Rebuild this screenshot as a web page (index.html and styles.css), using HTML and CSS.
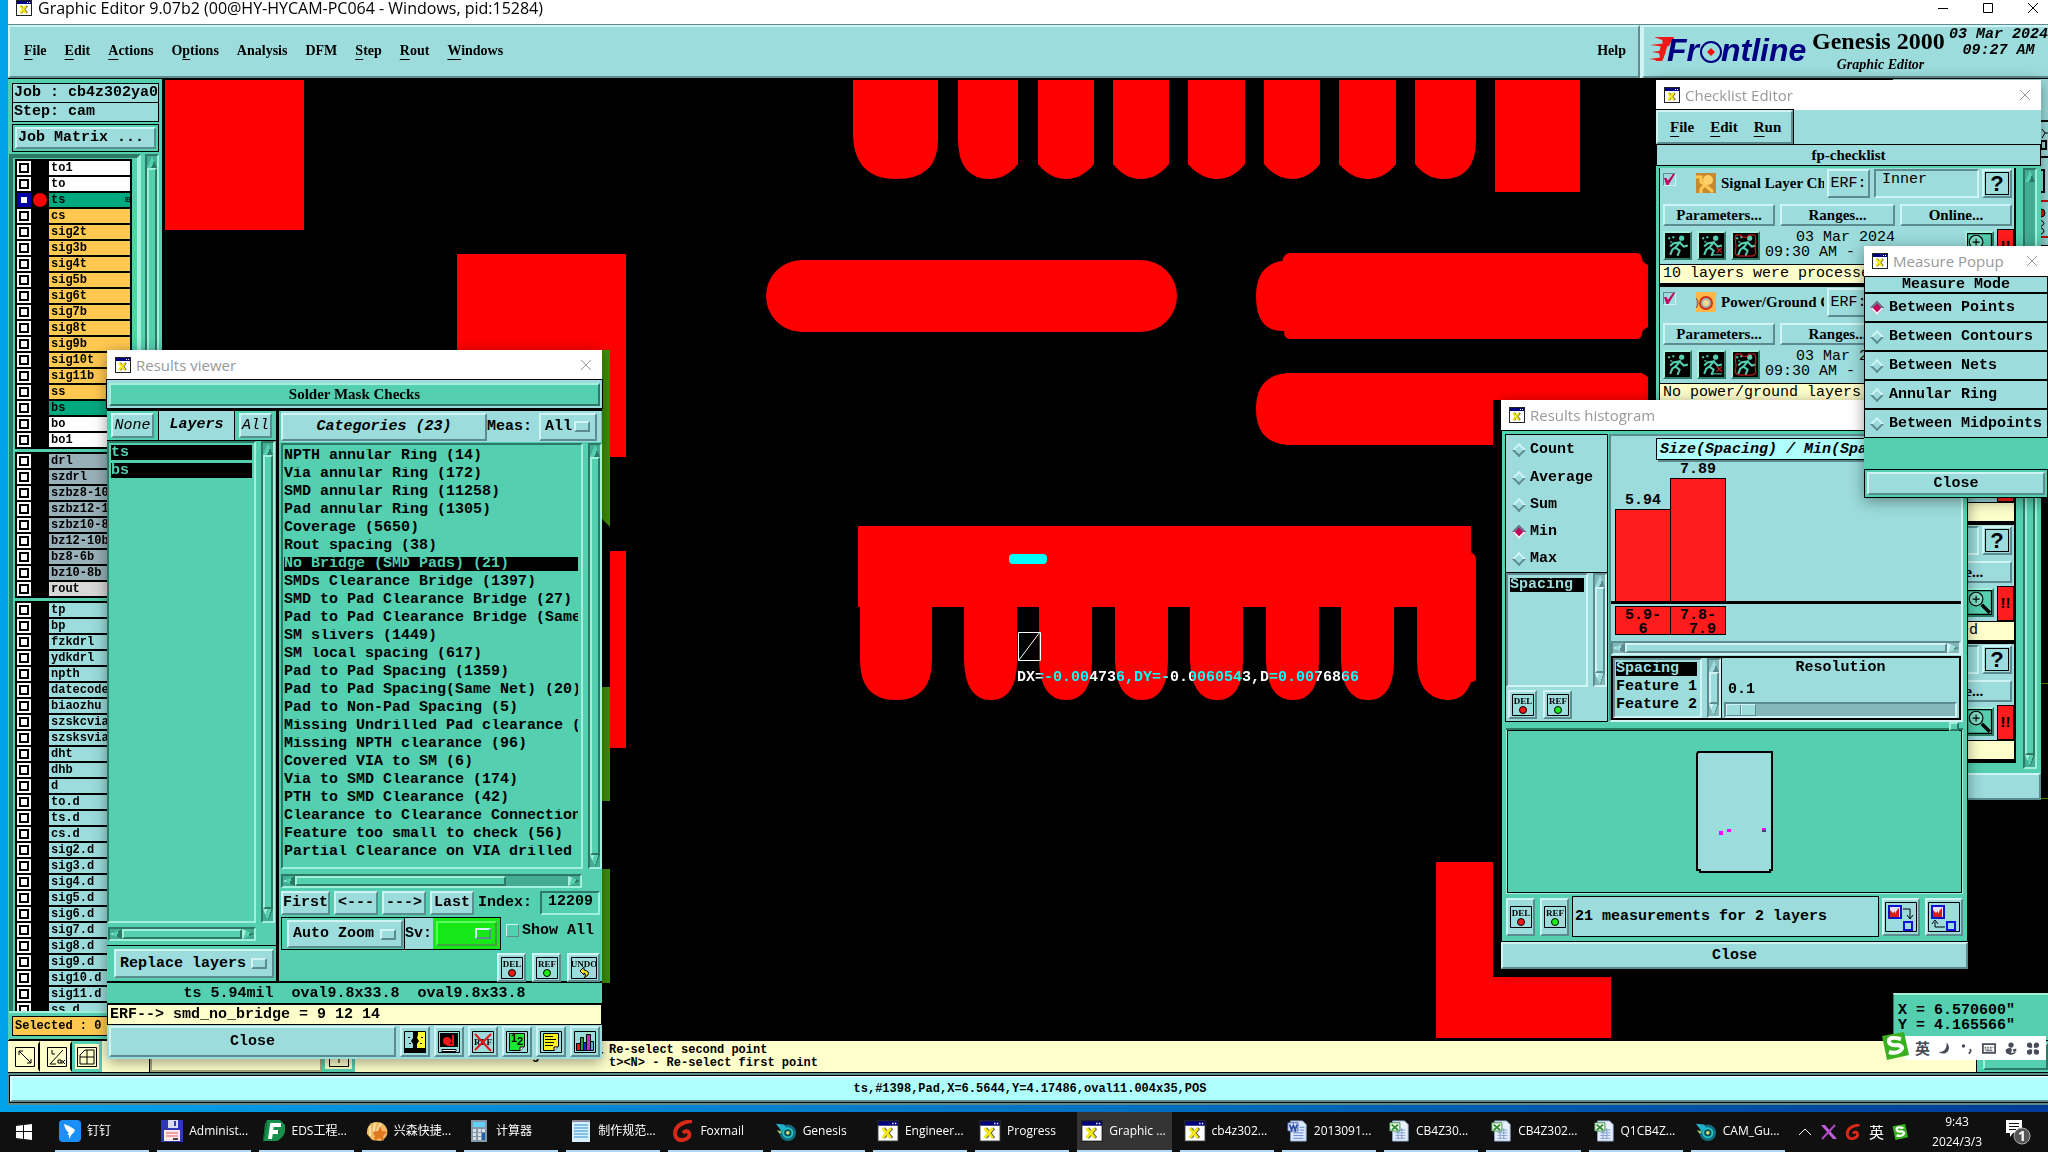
FILE: index.html
```html
<!DOCTYPE html>
<html lang="en">
<head>
<meta charset="utf-8">
<title>Graphic Editor 9.07b2</title>
<link rel="stylesheet" href="styles.css">
</head>
<body>
<svg class="defs" aria-hidden="true">
  <symbol id="xwin" viewBox="0 0 16 16"><path d="M0 0h16v16H0z" fill="#222"/><path d="M1 4h14v11H1z" fill="#fff"/><path d="M1 1h14v3H1z" fill="#000080"/><path d="M11 2h1v1h-1zM13 2h1v1h-1z" fill="#fff"/><path d="M5 6l6 7M11 6l-6 7" stroke="#665" stroke-width="2"/><path d="M4 6l6 7M10 6l-6 7" stroke="#f4e818" stroke-width="2"/></symbol>
  <symbol id="close" viewBox="0 0 12 12"><path d="M1 1l10 10M11 1L1 11" stroke="currentColor" fill="none"/></symbol>
  <symbol id="del" viewBox="0 0 22 22"><path d="M.5.500h21v21H.5z" fill="none" stroke="#000"/><text x="11" y="10" class="tiny">DEL</text><circle cx="11" cy="16" r="3.500" fill="#f01818" stroke="#000"/></symbol>
  <symbol id="ref" viewBox="0 0 22 22"><path d="M.5.500h21v21H.5z" fill="none" stroke="#000"/><text x="11" y="10" class="tiny">REF</text><circle cx="11" cy="16" r="3.500" fill="#18f018" stroke="#000"/></symbol>
  <symbol id="undo" viewBox="0 0 26 22"><path d="M.5.500h25v21H.5z" fill="none" stroke="#000"/><text x="13" y="10" class="tiny">UNDO</text><path d="M9 14l4-4v3q6 1 4 5l-4 3q3-4 0-5v2z" fill="#f8e020" stroke="#000"/></symbol>
  <symbol id="man" viewBox="0 0 24 24"><path d="M0 0h24v24H0z"/><circle cx="16" cy="5" r="2.500" fill="#54cfb0"/><path d="M15 8l-5 6 4 3-2 5M11 13l-4 3-2 5M14 9l-6 1-3 3M14 9l4 4 4-1" fill="none" stroke="#54cfb0" stroke-width="2"/><path d="M3 4h2v2H3zM7 3h2v2H7zM5 8h2v1H5z" fill="#54cfb0"/></symbol>
  <symbol id="manx" viewBox="0 0 24 24"><use href="#man"/><path d="M17 14l5 5M22 14l-5 5" stroke="#d02020"/><path d="M12 21h10" stroke="#54cfb0"/></symbol>
  <symbol id="manr" viewBox="0 0 24 24"><use href="#man"/><path d="M2 5l1-3h5l1 2h5l1-2h6l1 5-1 6 1 7-3 2H5l-3-2 1-7z" fill="none" stroke="#e02020"/></symbol>
  <symbol id="mag" viewBox="0 0 22 22"><path d="M.5.500h21v21H.5z" fill="none" stroke="#000"/><circle cx="8" cy="8" r="6" fill="#7edcc4" stroke="#000"/><path d="M8 5v6M5 8h6" stroke="#000"/><path d="M13 13l7 7" stroke="#000" stroke-width="3"/></symbol>
  <symbol id="eyelogo" viewBox="0 0 24 22"><circle cx="14" cy="13" r="9" fill="#126c80"/><circle cx="14" cy="13" r="6" fill="#24c8c0"/><circle cx="14" cy="13" r="4" fill="#104860"/><circle cx="14" cy="13" r="2" fill="#c8e860"/><path d="M1 3l9 1 3 5-6 2z" fill="#20b0c8"/><path d="M2 10l6 2-3 2z" fill="#a8d860"/></symbol>
  <symbol id="xls" viewBox="0 0 22 24"><path d="M4 1h13l4 4v18H4z" fill="#e8f0fc" stroke="#90a8d0"/><path d="M7 11h11M7 14h11M7 17h11M7 20h11M10 9v12M14 9v12" stroke="#7c98d0"/><path d="M1 3h11v9H1z" fill="#eef8ec" stroke="#3a8a40"/><path d="M3 5l7 6M10 5l-7 6" stroke="#2c8a34" stroke-width="2"/></symbol>
  <symbol id="doc" viewBox="0 0 22 24"><path d="M4 1h13l4 4v18H4z" fill="#dce8fc" stroke="#90a8d0"/><path d="M7 14h11M7 17h11M7 20h11M14 8h5M14 11h5" stroke="#5c80c8"/><path d="M1 3h11v9H1z" fill="#e8f0fc" stroke="#3458a8"/><path d="M3 5l2 6 2-5 2 5 2-6" fill="none" stroke="#2c50a8" stroke-width="2"/></symbol>
</svg>

<main class="desktop">
  <section class="app">
    <header class="app-title"><svg class="i16"><use href="#xwin"/></svg><h1>Graphic Editor 9.07b2 (00@HY-HYCAM-PC064 - Windows, pid:15284)</h1>
      <span class="wbtns"><svg viewBox="0 0 12 12"><path d="M1 6.500h10" stroke="#000"/></svg><svg viewBox="0 0 12 12"><path d="M1.500 1.500h9v9h-9z" stroke="#000" fill="none"/></svg><svg><use href="#close"/></svg></span></header>
    <div class="topbar">
      <nav class="menu up">
        <a href="#"><u>F</u>ile</a><a href="#"><u>E</u>dit</a><a href="#"><u>A</u>ctions</a><a href="#">O<u>p</u>tions</a><a href="#">Analysis</a><a href="#">DFM</a><a href="#"><u>S</u>tep</a><a href="#"><u>R</u>out</a><a href="#"><u>W</u>indows</a><a href="#" class="help">Help</a>
      </nav>
      <div class="brand up">
        <svg class="logo" viewBox="0 0 158 34"><path d="M5 2h20l-1 4H16zM1 10l18-2-2 4zM3 17l13-2-2 4zM0 24l15-2-2 4z" fill="#f01818"/><path d="M13 3h11l-4 8h-6zM12 10h7l-3 8h-6zM10 17h7l-4 9H6l5-3z" fill="#f01818"/><g class="logot"><text x="18" y="26">Fr</text><text x="72" y="26">ntline</text></g><circle cx="62" cy="17" r="10" fill="#9cdcdc" stroke="#000080" stroke-width="2"/><path d="M62 13l4 4-4 4-4-4z" fill="#f01010"/></svg>
        <div class="prod"><strong>Genesis 2000</strong><em>Graphic Editor</em></div>
        <div class="date">03 Mar 2024<br>09:27 AM</div>
      </div>
    </div>

    <div class="work">
      <aside class="side">
        <div class="jobbox">Job : cb4z302ya0</div>
        <div class="jobbox">Step: cam</div>
        <div class="jm"><button class="up">Job Matrix ...</button></div>
        <div class="layers">
          <div class="lyframe"><div class="lylist">
            <div class="grp">
              <label class="ly white"><input type="checkbox"><i></i><span>to1</span></label>
              <label class="ly white"><input type="checkbox"><i></i><span>to</span></label>
              <label class="ly green on"><input type="checkbox" checked><i></i><span>ts</span></label>
              <label class="ly gold"><input type="checkbox"><i></i><span>cs</span></label>
              <label class="ly gold"><input type="checkbox"><i></i><span>sig2t</span></label>
              <label class="ly gold"><input type="checkbox"><i></i><span>sig3b</span></label>
              <label class="ly gold"><input type="checkbox"><i></i><span>sig4t</span></label>
              <label class="ly gold"><input type="checkbox"><i></i><span>sig5b</span></label>
              <label class="ly gold"><input type="checkbox"><i></i><span>sig6t</span></label>
              <label class="ly gold"><input type="checkbox"><i></i><span>sig7b</span></label>
              <label class="ly gold"><input type="checkbox"><i></i><span>sig8t</span></label>
              <label class="ly gold"><input type="checkbox"><i></i><span>sig9b</span></label>
              <label class="ly gold"><input type="checkbox"><i></i><span>sig10t</span></label>
              <label class="ly gold"><input type="checkbox"><i></i><span>sig11b</span></label>
              <label class="ly gold"><input type="checkbox"><i></i><span>ss</span></label>
              <label class="ly green"><input type="checkbox"><i></i><span>bs</span></label>
              <label class="ly white"><input type="checkbox"><i></i><span>bo</span></label>
              <label class="ly white"><input type="checkbox"><i></i><span>bo1</span></label>
            </div>
            <div class="grp">
              <label class="ly slate"><input type="checkbox"><i></i><span>drl</span></label>
              <label class="ly slate"><input type="checkbox"><i></i><span>szdrl</span></label>
              <label class="ly slate"><input type="checkbox"><i></i><span>szbz8-10</span></label>
              <label class="ly slate"><input type="checkbox"><i></i><span>szbz12-1</span></label>
              <label class="ly slate"><input type="checkbox"><i></i><span>szbz10-8</span></label>
              <label class="ly slate"><input type="checkbox"><i></i><span>bz12-10b</span></label>
              <label class="ly slate"><input type="checkbox"><i></i><span>bz8-6b</span></label>
              <label class="ly slate"><input type="checkbox"><i></i><span>bz10-8b</span></label>
              <label class="ly grey"><input type="checkbox"><i></i><span>rout</span></label>
            </div>
            <div class="grp">
              <label class="ly"><input type="checkbox"><i></i><span>tp</span></label>
              <label class="ly"><input type="checkbox"><i></i><span>bp</span></label>
              <label class="ly"><input type="checkbox"><i></i><span>fzkdrl</span></label>
              <label class="ly"><input type="checkbox"><i></i><span>ydkdrl</span></label>
              <label class="ly"><input type="checkbox"><i></i><span>npth</span></label>
              <label class="ly"><input type="checkbox"><i></i><span>datecode</span></label>
              <label class="ly"><input type="checkbox"><i></i><span>biaozhu</span></label>
              <label class="ly"><input type="checkbox"><i></i><span>szskcvia</span></label>
              <label class="ly"><input type="checkbox"><i></i><span>szsksvia</span></label>
              <label class="ly"><input type="checkbox"><i></i><span>dht</span></label>
              <label class="ly"><input type="checkbox"><i></i><span>dhb</span></label>
              <label class="ly"><input type="checkbox"><i></i><span>d</span></label>
              <label class="ly"><input type="checkbox"><i></i><span>to.d</span></label>
              <label class="ly"><input type="checkbox"><i></i><span>ts.d</span></label>
              <label class="ly"><input type="checkbox"><i></i><span>cs.d</span></label>
              <label class="ly"><input type="checkbox"><i></i><span>sig2.d</span></label>
              <label class="ly"><input type="checkbox"><i></i><span>sig3.d</span></label>
              <label class="ly"><input type="checkbox"><i></i><span>sig4.d</span></label>
              <label class="ly"><input type="checkbox"><i></i><span>sig5.d</span></label>
              <label class="ly"><input type="checkbox"><i></i><span>sig6.d</span></label>
              <label class="ly"><input type="checkbox"><i></i><span>sig7.d</span></label>
              <label class="ly"><input type="checkbox"><i></i><span>sig8.d</span></label>
              <label class="ly"><input type="checkbox"><i></i><span>sig9.d</span></label>
              <label class="ly"><input type="checkbox"><i></i><span>sig10.d</span></label>
              <label class="ly"><input type="checkbox"><i></i><span>sig11.d</span></label>
              <label class="ly"><input type="checkbox"><i></i><span>ss.d</span></label>
            </div>
          </div></div>
          <div class="sbar v"><b class="ar n"></b><b class="th"></b><b class="ar s"></b></div>
        </div>
        <div class="selrow"><div class="selected">Selected : 0</div></div>
      </aside>

      <svg class="canvas">
        <g transform="translate(-164 -79)">
          <g fill="#f00">
            <path d="M165 80h139v150H165zM457 254h169v203H457zM610 551h16v197h-16z"/>
            <path d="M853 80h85v60q0 39-42 39t-43-45zM958 80h60v84q-12 15-28 15-32 0-32-40zM1038 80h56v84q-12 15-28 15t-28-15zM1113 80h56v84q-12 15-28 15t-28-15zM1188 80h57v84q-12 15-28 15t-29-15zM1264 80h56v84q-12 15-28 15t-28-15zM1339 80h57v84q-12 15-28 15t-29-15zM1415 80h61v60q0 39-33 39-16 0-28-15zM1495 80h85v112h-85z"/>
            <rect x="766" y="260" width="411" height="72" rx="36"/>
            <path d="M1292 260q-36 0-36 36t28 35q0 8 6 8h346q6 0 6-6 0-3 6-6v-62q-6-3-6-6 0-6-6-6h-346q-6 0-8 9z"/>
            <path d="M1292 373h350l6 4v68h-356q-36 0-36-36t36-36z"/>
            <path d="M858 526h613v26q5 3 5 8v119q0 3-5 3-3 8-8 13-6 5-16 5-30-2-30-40v-53h-23v53q0 40-26 40t-27-40v-53h-22v53q0 40-26 40t-27-40v-53h-23v53q0 40-26 40t-27-40v-53h-22v53q0 40-26 40t-27-40v-53h-23v53q0 40-26 40t-27-40v-53h-22v53q0 40-26 40t-27-40v-53h-32v53q0 40-36 40t-36-40v-53h-2z"/>
            <path d="M1436 862h57v115h118v61h-175z"/>
          </g>
          <path d="M602 350h8v177l-8-8zM602 687h8v114h-8zM602 869h8v114h-8z" fill="#409000"/>
          <path d="M1493 400h10v140h-10z"/>
          <rect x="1009" y="554" width="38" height="10" rx="4" fill="#0ff"/>
          <path d="M1018.500 632.500h22v28h-22zM1019 660l21-28" fill="none" stroke="#fff"/>
          <text class="dx" x="1017" y="681">DX=-0.004736,DY=-0.0060543,D=0.0076866</text>
        </g>
      </svg>

      <aside class="right">
        <div class="tools"><svg viewBox="0 0 8 166"><path d="M0 42h8M0 78h8" stroke="#000" stroke-width="2"/><path d="M2 50l3 4h3M5 54l-3 5" fill="none" stroke="#000"/><path d="M1 62h5v8H1z" fill="none" stroke="#000" stroke-width="2"/><path d="M0 91h4v22H0" fill="none" stroke="#000" stroke-width="2"/><path d="M0 122h8M0 158h8" stroke="#c01010" stroke-width="2"/><circle cx="1" cy="134" r="4" fill="#e01010" stroke="#000"/><path d="M0 141q8 3 0 7q8 4 0 8" fill="none" stroke="#000"/></svg></div>
        <svg class="rlines"><path d="M0 438.500h160M0 553.500h160" stroke="#409000"/></svg>
        <div class="coords">X = 6.570600"<br>Y = 4.165566"</div>
      </aside>
    </div>

    <div class="prompt">
      <button class="tool" aria-label="Snap"><svg viewBox="0 0 20 20"><path d="M.5.500h19v19H.5z" fill="none" stroke="#000"/><path d="M4 4l12 12M4 8V4h4M12 16h4v-4" fill="none" stroke="#000"/></svg></button>
      <button class="tool" aria-label="Angle"><svg viewBox="0 0 20 20"><path d="M.5.500h19v19H.5z" fill="none" stroke="#000"/><path d="M3 17L16 3M5 3v4h3M3 17h6M11 13h3v3h-3zM15 13v4M18 13l-2 2 2 2" fill="none" stroke="#000"/></svg></button>
      <button class="tool hot" aria-label="Grid"><svg viewBox="0 0 20 20"><path d="M.5.500h19v19H.5z" fill="none" stroke="#000"/><path d="M3 8l5-5h9v14H3zM10 3v14M3 10h14" fill="none" stroke="#000"/></svg></button>
      <span class="lead">Cmd :</span>
      <input class="cmd" aria-label="Command" type="text">
      <button class="tool hot narrow" aria-label="Keypad"><svg viewBox="0 0 20 20"><path d="M.5.500h19v19H.5zM10 4v12M4 10h12" fill="none" stroke="#000"/></svg></button>
      <div class="msg"><span class="m1">&lt;M1&gt; - Select first rectangle corner</span><span class="m2">Re-select second point<br>t&gt;&lt;N&gt; - Re-select first point</span></div>
      <div class="then"><button class="gup">Then =</button></div>
    </div>
    <div class="status"><div>ts,#1398,Pad,X=6.5644,Y=4.17486,oval11.004x35,POS</div></div>
  </section>

  <!-- Checklist editor -->
  <section class="win check">
    <header><svg class="i16"><use href="#xwin"/></svg><h2>Checklist Editor</h2><svg class="x"><use href="#close"/></svg></header>
    <div class="cmenu"><nav class="menu up"><a href="#"><u>F</u>ile</a><a href="#"><u>E</u>dit</a><a href="#"><u>R</u>un</a></nav></div>
    <div class="cname">fp-checklist</div>
    <div class="cbody">
      <div class="items">
        <article class="item">
          <div class="r1"><input type="checkbox" class="ck" checked aria-label="Use signal layer checks"><svg class="i20" viewBox="0 0 20 20"><path d="M0 0h20v20H0z" fill="#c88830"/><path d="M0 4h5v5l4 3-4 4v4M9 12l8 7" fill="none" stroke="#ffc850" stroke-width="3"/><circle cx="12" cy="7" r="5" fill="#ffd068"/></svg><span class="nm">Signal Layer Ch</span><button class="up erf">ERF:</button><input type="text" class="dn" value="Inner" aria-label="ERF model"><button class="up q" aria-label="Help"><b>?</b></button></div>
          <div class="r2"><button class="up">Parameters...</button><button class="up">Ranges...</button><button class="up">Online...</button></div>
          <div class="r3"><button class="gup" aria-label="Run"><svg><use href="#man"/></svg></button><button class="gup" aria-label="Run selected"><svg><use href="#manx"/></svg></button><button class="gup" aria-label="Run in area"><svg><use href="#manr"/></svg></button><p><span>03 Mar 2024</span><br>09:30 AM - 0</p><button class="gup" aria-label="View results"><svg><use href="#mag"/></svg></button><span class="bang">!!</span></div>
          <div class="note">10 layers were processed</div>
        </article>
        <article class="item">
          <div class="r1"><input type="checkbox" class="ck" checked aria-label="Use power ground checks"><svg class="i20" viewBox="0 0 20 20"><path d="M0 0h20v20H0z" fill="#ffb848"/><circle cx="10" cy="11" r="6" fill="#9cb8b0" stroke="#d83018" stroke-width="2"/><circle cx="10" cy="11" r="3" fill="#ffd890"/><path d="M0 6q4 5 0 10" fill="#9cb8b0" stroke="#805020"/></svg><span class="nm">Power/Ground C</span><button class="up erf">ERF:</button><input type="text" class="dn" aria-label="ERF model"><button class="up q" aria-label="Help"><b>?</b></button></div>
          <div class="r2"><button class="up">Parameters...</button><button class="up">Ranges...</button><button class="up">Online...</button></div>
          <div class="r3"><button class="gup" aria-label="Run"><svg><use href="#man"/></svg></button><button class="gup" aria-label="Run selected"><svg><use href="#manx"/></svg></button><button class="gup" aria-label="Run in area"><svg><use href="#manr"/></svg></button><p><span>03 Mar 2024</span><br>09:30 AM - </p><button class="gup" aria-label="View results"><svg><use href="#mag"/></svg></button><span class="bang">!!</span></div>
          <div class="note">No power/ground layers</div>
        </article>
        <article class="item">
          <div class="r1"><input type="checkbox" class="ck" checked aria-label="Use drill checks"><span class="nm"></span><button class="up q" aria-label="Help"><b>?</b></button></div>
          <div class="r2"><button class="up"></button><button class="up"></button><button class="up">Online...</button></div>
          <div class="r3"><p></p><button class="gup" aria-label="View results"><svg><use href="#mag"/></svg></button><span class="bang">!!</span></div>
          <div class="note"></div>
        </article>
        <article class="item">
          <div class="r1"><input type="checkbox" class="ck" checked aria-label="Use solder mask checks"><span class="nm"></span><input type="text" class="dn" aria-label="ERF model"><button class="up q" aria-label="Help"><b>?</b></button></div>
          <div class="r2"><button class="up"></button><button class="up"></button><button class="up">Online...</button></div>
          <div class="r3"><p></p><button class="gup" aria-label="View results"><svg><use href="#mag"/></svg></button><span class="bang">!!</span></div>
          <div class="note">10 signal layers were all processed</div>
        </article>
        <article class="item">
          <div class="r1"><input type="checkbox" class="ck" checked aria-label="Use silk screen checks"><span class="nm"></span><input type="text" class="dn" aria-label="ERF model"><button class="up q" aria-label="Help"><b>?</b></button></div>
          <div class="r2"><button class="up"></button><button class="up"></button><button class="up">Online...</button></div>
          <div class="r3"><p></p><button class="gup" aria-label="View results"><svg><use href="#mag"/></svg></button><span class="bang">!!</span></div>
          <div class="note"></div>
        </article>
      </div>
      <div class="sbar v"><b class="ar n"></b><b class="sp"></b><b class="th"></b><b class="ar s"></b></div>
    </div>
    <button class="up wide" aria-label="Close"></button>
  </section>

  <!-- Results viewer -->
  <section class="win viewer">
    <header><svg class="i16"><use href="#xwin"/></svg><h2>Results viewer</h2><svg class="x"><use href="#close"/></svg></header>
    <div class="vtitle"><div class="gup">Solder Mask Checks</div></div>
    <div class="vcols">
      <div class="vleft">
        <div class="lhead"><span><button class="up it">None</button></span><strong>Layers</strong><span><button class="up it">All</button></span></div>
        <div class="listrow">
          <ul class="gdn list"><li class="on">ts</li><li class="on">bs</li></ul>
          <div class="sbar v"><b class="ar n"></b><b class="th"></b><b class="ar s"></b></div>
        </div>
        <div class="sbar h"><b class="ar w"></b><b class="th"></b><b class="ar e"></b></div>
        <div class="rep"><span class="pick up"><select aria-label="Layer mode"><option>Replace layers</option></select></span></div>
      </div>
      <div class="vright">
        <div class="chead"><button class="up">Categories (23)</button><label for="meas">Meas:</label><span class="pick up"><select id="meas"><option>All</option></select></span></div>
        <div class="listrow">
          <ul class="gdn list">
            <li>NPTH annular Ring (14)</li>
            <li>Via annular Ring (172)</li>
            <li>SMD annular Ring (11258)</li>
            <li>Pad annular Ring (1305)</li>
            <li>Coverage (5650)</li>
            <li>Rout spacing (38)</li>
            <li class="on">No Bridge (SMD Pads) (21)</li>
            <li>SMDs Clearance Bridge (1397)</li>
            <li>SMD to Pad Clearance Bridge (27)</li>
            <li>Pad to Pad Clearance Bridge (Same</li>
            <li>SM slivers (1449)</li>
            <li>SM local spacing (617)</li>
            <li>Pad to Pad Spacing (1359)</li>
            <li>Pad to Pad Spacing(Same Net) (20)</li>
            <li>Pad to Non-Pad Spacing (5)</li>
            <li>Missing Undrilled Pad clearance (</li>
            <li>Missing NPTH clearance (96)</li>
            <li>Covered VIA to SM (6)</li>
            <li>Via to SMD Clearance (174)</li>
            <li>PTH to SMD Clearance (42)</li>
            <li>Clearance to Clearance Connection</li>
            <li>Feature too small to check (56)</li>
            <li>Partial Clearance on VIA drilled</li>
          </ul>
          <div class="sbar v"><b class="ar n"></b><b class="th"></b><b class="ar s"></b></div>
        </div>
        <div class="sbar h"><b class="ar w"></b><b class="th"></b><b class="sp"></b><b class="ar e"></b></div>
        <div class="nav"><button class="up">First</button><button class="up">&lt;---</button><button class="up">---&gt;</button><button class="up">Last</button><label for="idx">Index:</label><input id="idx" type="text" class="gin" value="12209"></div>
        <div class="zoomrow"><div class="zbox"><span class="pick up"><select aria-label="Zoom mode"><option>Auto Zoom</option></select></span></div><div class="svbox"><label for="sv">Sv:</label><span class="pick sv"><select id="sv"><option></option></select></span></div><label class="showall"><input type="checkbox" class="ck">Show All</label></div>
        <div class="icons"><button class="up" aria-label="Delete"><svg><use href="#del"/></svg></button><button class="up" aria-label="Reference"><svg><use href="#ref"/></svg></button><button class="up u" aria-label="Undo"><svg><use href="#undo"/></svg></button></div>
      </div>
    </div>
    <div class="vinfo">ts 5.94mil  oval9.8x33.8  oval9.8x33.8</div>
    <div class="verf">ERF--&gt; smd_no_bridge = 9 12 14</div>
    <div class="vfoot">
      <button class="up cl">Close</button>
      <button class="up ic" aria-label="Compare"><svg viewBox="0 0 22 22"><path d="M0 0h22v22H0z" fill="#9cdcdc"/><path d="M13 0h9v22h-9z" fill="#ffff30"/><path d="M9 0h5v4l-1 3 2 3-2 3v4h9v5H0v-5h9v-4l-2-3 2-3z"/><path d="M.5.500h21v21H.5z" fill="none" stroke="#000"/><path d="M4 6h2v1H4zM17 6h2v1h-2zM5 12h2v1H5zM16 12h2v1h-2z"/></svg></button>
      <button class="up ic" aria-label="Record"><svg viewBox="0 0 22 22"><path d="M.5.500h21v21H.5z" fill="none" stroke="#000"/><path d="M2 2h18v14H2z"/><circle cx="9" cy="10" r="4" fill="#f01818"/><path d="M15 4v10h-6" fill="none" stroke="#f01818" stroke-width="2"/><path d="M4 18.500h14v2H4z" fill="#fff" stroke="#000"/></svg></button>
      <button class="up ic" aria-label="Clear reference"><svg viewBox="0 0 22 22"><path d="M.5.500h21v21H.5z" fill="none" stroke="#000"/><text x="11" y="14" class="tiny">REF</text><path d="M3 3l16 17M19 3L3 19" stroke="#e01818" stroke-width="2"/></svg></button>
      <button class="up ic" aria-label="Numbers"><svg viewBox="0 0 22 22"><path d="M.5.500h21v21H.5z" fill="none" stroke="#000"/><path d="M3.500 2.500h15v13l-4 4h-11z" fill="#18e830" stroke="#000"/><path d="M14 20v-4h4" fill="#fff" stroke="#000"/><text x="5" y="11" class="num">1</text><text x="11" y="14" class="num">2</text></svg></button>
      <button class="up ic" aria-label="Report"><svg viewBox="0 0 22 22"><path d="M.5.500h21v21H.5z" fill="none" stroke="#000"/><path d="M3.500 2.500h15v13l-4 4h-11z" fill="#f8f020" stroke="#000"/><path d="M5 5.500h8M5 8.500h11M5 11.500h9M5 14.500h8" stroke="#000"/><path d="M14 20v-4h4" fill="#fff" stroke="#000"/></svg></button>
      <button class="up ic" aria-label="Histogram"><svg viewBox="0 0 22 22"><path d="M.5.500h21v21H.5z" fill="none" stroke="#000"/><path d="M2.500 12.500h4v7h-4z" fill="#e01818" stroke="#000"/><path d="M6.500 6.500h3v13h-3z" fill="#18a830" stroke="#000"/><path d="M9.500 11.500h3v8h-3z" fill="#2020d0" stroke="#000"/><path d="M12.500 3.500h4v16h-4z" fill="#c030c0" stroke="#000"/><path d="M16.500 10.500h3v9h-3z" fill="#50a8f0" stroke="#000"/></svg></button>
    </div>
  </section>

  <!-- Results histogram -->
  <section class="win hist">
    <header><svg class="i16"><use href="#xwin"/></svg><h2>Results histogram</h2></header>
    <div class="hbody">
      <div class="htop">
        <div class="hleft">
          <div class="radios">
            <label><input type="radio" name="agg">Count</label><label><input type="radio" name="agg">Average</label><label><input type="radio" name="agg">Sum</label><label><input type="radio" name="agg" checked>Min</label><label><input type="radio" name="agg">Max</label>
          </div>
          <div class="listrow"><ul class="dn list"><li class="on">Spacing</li></ul><div class="sbar v b"><b class="ar n"></b><b class="th"></b><b class="ar s"></b></div></div>
          <div class="icons"><button class="up" aria-label="Delete"><svg><use href="#del"/></svg></button><button class="up" aria-label="Reference"><svg><use href="#ref"/></svg></button></div>
        </div>
        <div class="hright">
          <div class="chart">
            <div class="ctitle">Size(Spacing) / Min(Spa</div>
            <div class="bars"><div><span>5.94</span><i class="b1"></i></div><div><span>7.89</span><i class="b2"></i></div></div>
            <div class="blabels"><span>5.9-<br>6</span><span>7.8-<br>&nbsp;7.9</span></div>
          </div>
          <div class="sbar h b"><b class="ar w"></b><b class="th"></b><b class="ar e"></b></div>
          <div class="hopts">
            <div class="listrow"><ul class="dn list"><li class="on">Spacing</li><li>Feature 1</li><li>Feature 2</li></ul><div class="sbar v b"><b class="ar n"></b><b class="th"></b><b class="ar s"></b></div></div>
            <div class="reso"><label for="res">Resolution</label><output for="res">0.1</output><input id="res" type="range" min="0" max="100" value="0"></div>
          </div>
        </div>
      </div>
      <div class="sash"><i></i></div>
      <div class="map"><svg viewBox="0 0 78 122"><path d="M1 3l1-2h74v118h-2v2H4v-2H1z" fill="#9cdcdc" stroke="#000" stroke-width="2"/><path d="M23 80h4v4h-4zM31 78h4v3h-4zM66 77h4v2h-4z" fill="#f0f"/><path d="M66 79h4v2h-4z" fill="#446"/></svg></div>
      <div class="hfoot"><button class="up" aria-label="Delete"><svg><use href="#del"/></svg></button><button class="up" aria-label="Reference"><svg><use href="#ref"/></svg></button><div class="count">21 measurements for 2 layers</div>
        <button class="up big" aria-label="Copy out"><svg viewBox="0 0 32 30"><path d="M.5.500h31v29H.5z" fill="none" stroke="#000"/><path d="M4 4h12v12H4z" fill="#e8e0f0" stroke="#1010d0" stroke-width="2"/><path d="M5 14V8l3 3 2-2v3l2-4 2-2v9H5z" fill="#e01818"/><path d="M19 20h8v8h-8z" fill="none" stroke="#1010e0" stroke-width="2"/><path d="M18 7h7v9M22 13l3 4 3-4" fill="none" stroke="#000"/></svg></button>
        <button class="up big" aria-label="Copy in"><svg viewBox="0 0 32 30"><path d="M.5.500h31v29H.5z" fill="none" stroke="#000"/><path d="M4 4h12v12H4z" fill="#e8e0f0" stroke="#1010d0" stroke-width="2"/><path d="M5 14V8l3 3 2-2v3l2-4 2-2v9H5z" fill="#e01818"/><path d="M19 20h8v8h-8z" fill="none" stroke="#1010e0" stroke-width="2"/><path d="M17 25H7v-5M4 22l3-4 3 4" fill="none" stroke="#000"/></svg></button>
      </div>
    </div>
    <button class="up wide">Close</button>
  </section>

  <!-- Measure popup -->
  <section class="win meas">
    <header><svg class="i16"><use href="#xwin"/></svg><h2>Measure Popup</h2><svg class="x"><use href="#close"/></svg></header>
    <div class="mmode">Measure Mode</div>
    <label><input type="radio" name="mm" checked>Between Points</label>
    <label><input type="radio" name="mm">Between Contours</label>
    <label><input type="radio" name="mm">Between Nets</label>
    <label><input type="radio" name="mm">Annular Ring</label>
    <label><input type="radio" name="mm">Between Midpoints</label>
    <div class="mfoot"><button class="up">Close</button></div>
  </section>

  <!-- Input method bar -->
  <div class="ime">
    <svg class="slogo" viewBox="0 0 28 28"><path d="M1 4L23 0l5 23-22 5z" fill="#38b020"/><path d="M20 7q-12-3-12 2t9 4q7 2 2 6-5 3-11 1" fill="none" stroke="#fff" stroke-width="4"/></svg>
    <div><span>英</span><svg viewBox="0 0 16 16"><path d="M10 1q6 7-1 12-4 2-8-1 9 0 9-11z"/></svg><svg viewBox="0 0 16 16"><circle cx="4" cy="5" r="2"/><path d="M11 9q3 1-1 5" fill="none" stroke="#484c58" stroke-width="2"/></svg><svg viewBox="0 0 16 16"><path d="M1 3h14v10H1z" fill="none" stroke="#484c58" stroke-width="2"/><path d="M3 6h2v1H3zM6 6h2v1H6zM9 6h2v1H9zM12 6h1v1h-1zM3 8h2v1H3zM6 8h2v1H6zM9 8h2v1H9zM4 10h8v1H4z"/></svg><svg viewBox="0 0 16 16"><circle cx="8" cy="4" r="3"/><path d="M2 9q6-3 7 0l-1 4 6-1q-3 4-7 3-6-1-5-6z"/><path d="M10 9l4-1v3l-3 1z"/></svg><svg viewBox="0 0 16 16"><circle cx="4" cy="4" r="3"/><circle cx="12" cy="4" r="3"/><circle cx="4" cy="12" r="3"/><circle cx="12" cy="12" r="3"/><path d="M4 4h3v3H4zM9 4h3v3H9zM4 9h3v3H4zM9 9h3v3H9z"/></svg></div>
  </div>
</main>

<footer class="taskbar">
  <button class="start" aria-label="Start"><svg viewBox="0 0 16 16"><path d="M0 2l7-1v6H0zM8 1l8-1v7H8zM0 8h7v7l-7-1zM8 8h8v8l-8-1z" fill="#fff"/></svg></button>
  <div class="tasks">
    <button><svg viewBox="0 0 22 22"><rect width="22" height="22" rx="4" fill="#1890f8"/><path d="M5 4q8 3 11 6-1 3-3 4l-3 5v-4l-2-1 2-1q-4-3-5-9z" fill="#fff"/></svg>钉钉</button>
    <button><svg viewBox="0 0 22 22"><path d="M0 0h22v22H0z" fill="#3038b8"/><path d="M7 0h10v8H7z" fill="#d8dcf0"/><path d="M13 1h2v5h-2z" fill="#3038b8"/><path d="M3 10h16v11H3z" fill="#fce8e8"/><path d="M5 13h12M5 16h12" stroke="#e06060"/><path d="M12 18h5v2h-5z" fill="#444"/></svg>Administ...</button>
    <button><svg viewBox="0 0 22 22"><path d="M4 0h13l5 5v7q-2 6-8 9H0L2 4z" fill="#18904c"/><path d="M0 22L4 1M7 20L10 6h9M9 12h8" fill="none" stroke="#0c5c30" stroke-width="1"/><path d="M7 19L9 5h9M8 12h7" fill="none" stroke="#fff" stroke-width="4"/></svg>EDS工程...</button>
    <button><svg viewBox="0 0 22 22"><path d="M1 14Q0 4 9 2q9-1 12 7 2 8-6 12l-9-1z" fill="#f0b860"/><path d="M4 16L4 6M7 14L9 3M11 12l4-9" stroke="#fce0a8" stroke-width="2"/><path d="M14 6l2 5 5 1-4 4 1 5-5-3-5 3 1-5-3-4 6-1z" fill="#e07820"/></svg>兴森快捷...</button>
    <button><svg viewBox="0 0 22 22"><path d="M3 0h16v22H3z" fill="#8498a8"/><path d="M5 2h12v5H5z" fill="#60d0f8"/><path d="M5 9h3v3H5zM10 9h3v3h-3zM5 13h3v3H5zM10 13h3v3h-3zM5 17h3v3H5zM10 17h3v3h-3zM14 9h3v3h-3z" fill="#d8e0e8"/><path d="M14 13h3v7h-3z" fill="#2060b0"/></svg>计算器</button>
    <button><svg viewBox="0 0 22 22"><path d="M2 2h18v20H2z" fill="#d8f0fc"/><path d="M4 5h14M4 8h14M4 11h14M4 14h14M4 17h14" stroke="#3090d0"/><path d="M2 0h18v2H2z" fill="#889"/></svg>制作规范...</button>
    <button><svg viewBox="0 0 22 22"><path d="M20 1Q3 3 3 14q1 7 8 6 8-2 6-7-2-4-6 0" fill="none" stroke="#d82818" stroke-width="4"/></svg>Foxmail</button>
    <button><svg><use href="#eyelogo"/></svg>Genesis</button>
    <button><svg><use href="#xwin"/></svg>Engineer...</button>
    <button><svg><use href="#xwin"/></svg>Progress</button>
    <button class="act"><svg><use href="#xwin"/></svg>Graphic ...</button>
    <button><svg><use href="#xwin"/></svg>cb4z302...</button>
    <button><svg><use href="#doc"/></svg>2013091...</button>
    <button><svg><use href="#xls"/></svg>CB4Z30...</button>
    <button><svg><use href="#xls"/></svg>CB4Z302...</button>
    <button><svg><use href="#xls"/></svg>Q1CB4Z...</button>
    <button><svg><use href="#eyelogo"/></svg>CAM_Gu...</button>
  </div>
  <div class="tray">
    <svg viewBox="0 0 16 16"><path d="M2 11l6-6 6 6" fill="none" stroke="#fff"/></svg>
    <svg viewBox="0 0 16 16"><path d="M0 1h4l12 14h-4z" fill="#c060d8"/><path d="M14 1L1 15" stroke="#b048c8" stroke-width="2"/></svg>
    <svg viewBox="0 0 22 22"><path d="M20 1Q3 3 3 14q1 7 8 6 8-2 6-7-2-4-6 0" fill="none" stroke="#d82818" stroke-width="4"/></svg>
    <span>英</span>
    <svg viewBox="0 0 28 28"><path d="M1 4L23 0l5 23-22 5z" fill="#38b020"/><path d="M20 7q-12-3-12 2t9 4q7 2 2 6-5 3-11 1" fill="none" stroke="#fff" stroke-width="4"/></svg>
    <time>9:43<br>2024/3/3</time>
    <svg class="note-i" viewBox="0 0 26 26"><path d="M0 1h16v13H7l-3 4v-4H0z" fill="#fff"/><path d="M3 4.500h10M3 7.500h10M3 10.500h7" stroke="#101010"/><circle cx="16" cy="17" r="8" fill="#555" stroke="#aaa"/><text x="16" y="22">1</text></svg>
  </div>
</footer>
</body>
</html>
```
FILE: styles.css
```css
:root {
  --teal: #54cfb0;
  --teal-lt: #a0f0dc;
  --teal-dk: #2c7a66;
  --blue: #9cdcdc;
  --blue-lt: #d0f4f4;
  --blue-dk: #5c8c90;
  --cream: #ffffcc;
  --mono: "Liberation Mono", "Noto Sans CJK SC", monospace;
  --serif: "Liberation Serif", "Noto Sans CJK SC", serif;
  --ui: "Open Sans", "Noto Sans CJK SC", sans-serif;
}
* { box-sizing: border-box; }
body {
  margin: 0; height: 100vh; overflow: hidden;
  display: flex; flex-direction: column;
  font: bold 15px/18px var(--mono); color: #000;
  background: linear-gradient(90deg, #00a2ec, #0070c0 55%, #003c98);
}
button, input, select { font: inherit; color: inherit; padding: 0; margin: 0; border: 0; border-radius: 0; background: none; }
h1, h2, p, ul { margin: 0; padding: 0; list-style: none; font: inherit; }
a { color: inherit; text-decoration: none; }
svg { display: block; flex: none; }
.defs { position: absolute; width: 0; height: 0; }
.tiny { font: bold 9px "Liberation Serif", serif; text-anchor: middle; }
.num { font: bold 11px "Liberation Sans", sans-serif; }
.i16 { width: 16px; height: 16px; }
.i20 { width: 20px; height: 20px; }

/* bevels */
.up { background: var(--blue); border: 2px solid; border-color: var(--blue-lt) var(--blue-dk) var(--blue-dk) var(--blue-lt); }
.dn { background: var(--blue); border: 2px solid; border-color: var(--blue-dk) var(--blue-lt) var(--blue-lt) var(--blue-dk); }
.gup { background: var(--teal); border: 2px solid; border-color: var(--teal-lt) var(--teal-dk) var(--teal-dk) var(--teal-lt); }
.gdn { background: var(--teal); border: 2px solid; border-color: var(--teal-dk) var(--teal-lt) var(--teal-lt) var(--teal-dk); }

/* scroll bars */
.sbar { display: flex; background: #44ac92; border: 2px solid; border-color: var(--teal-dk) var(--teal-lt) var(--teal-lt) var(--teal-dk); flex: none; }
.sbar b { display: block; }
.sbar.v { flex-direction: column; width: 14px; }
.sbar.h { height: 14px; }
.sbar .th { flex: 1; background: var(--teal); border: 2px solid; border-color: var(--teal-lt) var(--teal-dk) var(--teal-dk) var(--teal-lt); }
.sbar .ar { flex: none; width: 10px; height: 10px; background: linear-gradient(110deg, var(--teal-lt) 30%, var(--teal) 30% 60%, var(--teal-dk) 60%); }
.ar.n { clip-path: polygon(50% 0, 100% 100%, 0 100%); }
.ar.s { clip-path: polygon(0 0, 100% 0, 50% 100%); }
.ar.w { clip-path: polygon(0 50%, 100% 0, 100% 100%); }
.ar.e { clip-path: polygon(0 0, 100% 50%, 0 100%); }
.sbar.v .ar { height: 12px; }
.sbar.h .ar { width: 12px; }
.sbar.b { background: #84b8b8; border-color: var(--blue-dk) var(--blue-lt) var(--blue-lt) var(--blue-dk); }
.sbar.b .th { background: var(--blue); border-color: var(--blue-lt) var(--blue-dk) var(--blue-dk) var(--blue-lt); }
.sbar.b .ar { background: linear-gradient(110deg, var(--blue-lt) 30%, var(--blue) 30% 60%, var(--blue-dk) 60%); }

/* main window */
.desktop { flex: 1; min-height: 0; padding: 0 0 7px 8px; position: relative; display: flex; overflow: hidden; }
.app { flex: 1; min-width: 0; display: flex; flex-direction: column; background: var(--teal); }
.app-title { height: 24px; background: #fff; display: flex; gap: 6px; padding-left: 8px; font: 16px/16px var(--ui); flex: none; }
.wbtns { margin-left: auto; display: flex; gap: 33px; padding: 2px 9px 0 0; }
.wbtns svg { width: 12px; height: 12px; }
.topbar { display: flex; height: 55px; background: var(--blue-lt); border-top: 1px solid var(--blue-dk); border-bottom: 1px solid #000; gap: 2px; font: bold 14px/18px var(--serif); flex: none; }
.menu { display: flex; align-items: center; gap: 18px; }
.topbar .menu { flex: 1; padding: 0 0 2px 14px; }
.menu u { text-underline-offset: 4px; }
.help { margin-left: auto; padding-right: 12px; }
.brand { width: 406px; display: flex; overflow: hidden; padding: 0 0 0 5px; border-right: 0; }
.logo { width: 158px; height: 34px; margin-top: 8px; }
.logot { font: italic bold 32px "Liberation Sans", sans-serif; fill: #000080; }
.prod { width: 142px; padding-left: 5px; flex: none; text-align: center; }
.prod strong { display: block; font-size: 24px; line-height: 28px; white-space: nowrap; text-align: left; }
.prod em { display: block; line-height: 20px; }
.date { font: italic bold 15px/16px var(--mono); white-space: nowrap; text-align: center; flex: none; }

.work { flex: 1; min-height: 0; display: flex; }
.side { width: 156px; display: flex; flex-direction: column; padding: 4px 3px 0 4px; border-right: 2px solid #000; flex: none; }
.jobbox { border: 1px solid #000; background: var(--blue); height: 20px; line-height: 18px; padding-left: 1px; margin-bottom: -1px; white-space: nowrap; flex: none; }
.jm { border: 1px solid #000; margin-top: 3px; padding: 2px; flex: none; }
.jm button { width: 100%; height: 22px; text-align: left; padding-left: 1px; display: block; }
.layers { flex: 1; min-height: 0; display: flex; gap: 4px; margin: 2px 0 0 -3px; }
.lyframe { flex: 1; min-width: 0; border: 4px solid; border-color: var(--teal-dk) var(--teal-lt) var(--teal) var(--teal-dk); border-bottom: 0; padding: 1px 5px 0 2px; overflow: hidden; display: flex; }
.lylist { flex: 1; display: flex; flex-direction: column; gap: 3px; min-width: 0; }
.grp { background: #000; padding: 1px 2px; font-size: 12px; flex: none; }
.ly { display: grid; grid-template-columns: 14px 18px 1fr; height: 16px; padding: 1px 0; line-height: 14px; overflow: hidden; }
.ly span { background: var(--blue); padding-left: 2px; white-space: nowrap; overflow: hidden; }
.ly input { appearance: none; width: 14px; height: 14px; background: #fff; border: 2px solid #fff; box-shadow: inset 0 0 0 2px #000; }
.ly.white span { background: #fff; }
.ly.gold span { background: #ffc850; }
.ly.green span { background: #00a880; }
.ly.slate span { background: #98b0b8; }
.ly.grey span { background: #d8d8d8; }
.ly.on input { border-color: #0000a0; box-shadow: inset 0 0 0 2px #0000a0; }
.ly.on i { background: #f00; border-radius: 50%; width: 14px; height: 14px; margin-left: 2px; }
.ly.on span::after { content: "⊞"; float: right; font-size: 8px; }
.side .sbar { border-bottom: 0; }
.selrow { border-top: 2px solid var(--teal-lt); margin: 0 -3px 0 -3px; padding: 3px 0 3px 3px; border-bottom: 1px solid #000; flex: none; }
.selected { border: 1px solid #000; background: #ffc850; font-size: 12px; line-height: 18px; padding-left: 2px; }
.canvas { flex: 1; min-width: 0; height: 100%; background: #000; }
.dx { font: bold 15px var(--mono); fill: #fff; mix-blend-mode: difference; }
.right { width: 155px; background: #000; display: flex; flex-direction: column; flex: none; }
.tools { height: 166px; background: var(--blue); display: flex; justify-content: flex-end; flex: none; }
.tools svg { width: 8px; height: 166px; }
.rlines { width: 100%; flex: 1; min-height: 0; }
.coords { height: 47px; background: var(--teal); border-top: 2px solid var(--teal-lt); border-left: 1px solid var(--teal-dk); padding: 8px 0 0 4px; line-height: 15px; flex: none; }

.prompt { height: 33px; background: var(--cream); border-top: 1px solid #000; border-bottom: 1px solid #000; display: flex; font-size: 12px; line-height: 13px; flex: none; }
.tool { width: 32px; border: 3px solid var(--cream); border-right: 2px solid #000; background: var(--cream); display: flex; justify-content: center; align-items: center; flex: none; }
.tool svg { width: 20px; height: 20px; }
.tool.hot { width: 30px; border: 3px solid var(--teal); }
.tool.narrow { width: 33px; }
.lead { width: 48px; padding: 8px 0 0 6px; flex: none; }
.cmd { width: 172px; border: 2px solid #a8a880; outline: 1px solid #000; flex: none; }
.msg { flex: 1; display: flex; align-items: center; overflow: hidden; white-space: nowrap; }
.m1 { width: 249px; text-align: right; direction: ltr; flex: none; display: flex; justify-content: flex-end; }
.m2 { margin-left: 5px; }
.then { width: 72px; background: var(--teal); border-left: 1px solid #000; padding: 2px 0 2px 6px; flex: none; }
.then button { width: 100%; height: 100%; font-size: 15px; }
.status { height: 32px; border: 2px solid var(--blue-dk); border-right: 0; background: #000; padding: 1px 0; flex: none; }
.status div { height: 26px; background: #b0ffff; border: 2px solid; border-color: #d8ffff #5c8c90 #5c8c90 #d8ffff; border-right: 0; outline: 1px solid #000; text-align: center; font-size: 12px; line-height: 22px; }

/* floating windows */
.win { position: absolute; background: var(--teal); display: flex; flex-direction: column; box-shadow: 0 3px 14px rgba(0, 0, 0, .4); }
.win header { height: 30px; background: #fff; display: flex; align-items: center; gap: 5px; padding: 0 10px 0 8px; font: 15px/20px var(--ui); color: #999; flex: none; white-space: nowrap; }
.win header .x { width: 12px; height: 12px; margin-left: auto; }
.wide { width: 100%; height: 27px; flex: none; }
.icons { display: flex; gap: 6px; }
.icons button, .hfoot button { width: 29px; height: 29px; display: flex; align-items: center; justify-content: center; }
.icons svg, .hfoot svg { width: 22px; height: 22px; }
.listrow { display: flex; gap: 5px; min-height: 0; }
.list { flex: 1; min-width: 0; overflow: hidden; }
.list li { height: 14px; line-height: 14px; margin-bottom: 4px; overflow: hidden; white-space: nowrap; }
.list .on { background: #000; color: var(--teal); }
.list.dn .on { color: var(--blue); }
input[type="radio"] { appearance: none; width: 10px; height: 10px; transform: rotate(45deg); border: 2px solid; border-color: var(--blue-lt) var(--blue-dk) var(--blue-dk) var(--blue-lt); flex: none; }
input[type="radio"]:checked { background: #c8005c; border-color: #607888 #e8f8f8 #e8f8f8 #607888; }
.ck { appearance: none; width: 13px; height: 13px; border: 1px solid; border-color: var(--blue-lt) var(--blue-dk) var(--blue-dk) var(--blue-lt); flex: none; }
.ck:checked { border-color: var(--blue-dk) var(--blue-lt) var(--blue-lt) var(--blue-dk); }
.ck:checked::before { content: ""; display: block; width: 11px; height: 11px; background: #c00060; clip-path: polygon(0 36%, 22% 36%, 36% 62%, 82% 0, 100% 0, 40% 100%, 22% 100%); }
.pick { display: flex; position: relative; align-items: center; }
.pick select { appearance: none; width: 100%; height: 100%; }
.pick::after { content: ""; position: absolute; right: 5px; width: 12px; height: 7px; border: 2px solid; border-color: var(--blue-lt) var(--blue-dk) var(--blue-dk) var(--blue-lt); pointer-events: none; }

/* checklist editor */
.check { left: 1656px; top: 80px; width: 385px; height: 720px; }
.cmenu { background: var(--blue); height: 35px; border-bottom: 1px solid #000; font: bold 15px/18px var(--serif); display: flex; flex: none; }
.cmenu .menu { width: 137px; padding-left: 12px; outline: 1px solid #000; gap: 16px; }
.cname { background: var(--blue); height: 21px; border: 1px solid #000; border-top: 0; text-align: center; font: bold 15px/20px var(--serif); flex: none; }
.cbody { flex: 1; min-height: 0; display: flex; justify-content: space-between; padding: 2px 4px 4px 3px; }
.items { width: 357px; border-left: 1px solid #000; }
.cbody .sbar .sp { height: 130px; }
.item { background: var(--blue); height: 119px; border-right: 2px solid #000; border-bottom: 3px solid #000; padding: 1px 0 0 3px; font-weight: normal; display: grid; grid-template-columns: 100%; grid-template-rows: 30px 5px 22px 3px 35px 20px; }
.r1 { grid-row: 1; display: flex; align-items: flex-start; padding-right: 2px; }
.r1 .ck { margin-top: 4px; }
.r1 .i20 { margin: 4px 5px 0 20px; }
.nm { flex: 1; min-width: 0; font: bold 15px/28px var(--serif); white-space: nowrap; overflow: hidden; }
.erf { width: 43px; height: 29px; margin: 0 4px 0 3px; flex: none; }
.r1 .dn { width: 105px; height: 29px; padding: 0 0 8px 6px; flex: none; }
.q { width: 30px; height: 29px; margin-left: 3px; padding: 1px; flex: none; }
.q b { display: block; border: 1px solid #000; font: bold 22px/21px "Liberation Sans", sans-serif; }
.r2 { grid-row: 3; display: grid; grid-template-columns: 112px 115px 112px; gap: 5px; font: bold 15px/18px var(--serif); }
.r3 { grid-row: 5; display: flex; gap: 5px; align-items: flex-start; }
.r3 button { width: 29px; height: 29px; padding: 0; margin-top: 2px; flex: none; }
.r3 svg { width: 25px; height: 25px; }
.r3 p { flex: 1; line-height: 15px; padding-top: 1px; white-space: nowrap; }
.r3 p span { margin-left: 31px; }
.bang { width: 17px; height: 35px; background: #ff1c1c; border: 1px solid #000; margin-left: -2px; font: bold 15px/32px "Liberation Sans", sans-serif; text-align: center; flex: none; }
.note { grid-row: 6; background: var(--cream); border: 1px solid #000; border-width: 1px 0; margin-left: -3px; padding-left: 3px; white-space: nowrap; overflow: hidden; }

/* results viewer */
.viewer { left: 107px; top: 350px; width: 495px; height: 709px; }
.vtitle { border: 2px solid var(--blue); border-top-width: 3px; outline: 1px solid #000; height: 28px; flex: none; }
.vtitle .gup { height: 23px; text-align: center; font: bold 15px/19px var(--serif); }
.vcols { display: flex; flex: 1; min-height: 0; border-top: 3px solid #000; border-bottom: 2px solid #000; }
.vleft { width: 172px; border-right: 3px solid #000; display: flex; flex-direction: column; flex: none; }
.lhead { display: flex; height: 30px; border-bottom: 1px solid #000; background: var(--teal); flex: none; }
.lhead span { padding: 2px 4px; }
.lhead strong { flex: 1; background: var(--blue); text-align: center; line-height: 28px; font-style: italic; border: 1px solid #000; border-width: 0 1px; }
.it { font-style: italic; font-weight: normal; height: 25px; }
.lhead span:first-child .it { width: 43px; }
.lhead span:last-child .it { width: 33px; }
.vleft .listrow { flex: 1; }
.vleft .list { padding: 2px 2px; }
.vleft .listrow .sbar { margin-right: 1px; }
.vleft > .sbar { width: 148px; margin: 4px 0 4px 1px; }
.vleft .list li { height: 15px; margin-bottom: 3px; line-height: 15px; }
.rep { border-top: 1px solid #000; padding: 3px 2px 3px 7px; flex: none; }
.rep .pick { height: 29px; padding-left: 4px; }
.vright { flex: 1; min-width: 0; display: flex; flex-direction: column; padding-left: 2px; }
.chead { display: flex; height: 31px; background: var(--blue); align-items: center; margin-right: 1px; flex: none; }
.chead button { width: 206px; height: 28px; font-style: italic; }
.chead label { width: 52px; }
.chead .pick { width: 58px; height: 28px; padding-left: 4px; }
.vright .listrow { height: 426px; margin-top: 1px; flex: none; }
.vright .list { padding: 4px 3px 0 1px; }
.vright > .sbar { width: 301px; margin-top: 5px; }
.vright > .sbar .sp { width: 62px; }
.nav { display: flex; gap: 4px; margin: 3px 2px 0 0; align-items: center; white-space: nowrap; }
.nav button { height: 24px; flex: 1 1 44px; }
.nav label { width: 58px; }
.gin { width: 60px; height: 24px; background: var(--teal); border: 2px solid; border-color: var(--teal-dk) var(--teal-lt) var(--teal-lt) var(--teal-dk); padding: 0 0 4px 6px; }
.zoomrow { display: flex; margin-top: 2px; }
.zbox, .svbox { border: 1px solid #000; height: 33px; display: flex; }
.zbox { padding: 2px 1px 1px 5px; width: 124px; }
.zbox .pick { flex: 1; padding-left: 4px; }
.svbox { background: var(--blue); align-items: center; border-left: 0; width: 96px; }
.svbox label { width: 28px; }
.sv { flex: 1; height: 31px; background: #18e818; border: 4px solid #18e818; outline: 2px outset #60f860; outline-offset: -5px; }
.showall { display: flex; gap: 3px; align-items: center; padding: 0 0 6px 5px; }
.vright .icons { justify-content: flex-end; margin: 3px 2px 0 0; }
.icons .u { width: 33px; }
.icons .u svg { width: 26px; }
.vinfo { height: 20px; text-align: center; white-space: pre; line-height: 22px; flex: none; }
.verf { height: 22px; background: var(--cream); border: 1px solid #000; border-top-width: 2px; padding-left: 2px; line-height: 20px; white-space: pre; flex: none; }
.vfoot { background: var(--blue); display: flex; gap: 4px; padding: 1px 2px 2px; flex: none; height: 34px; }
.vfoot .cl { flex: 1; }
.ic { width: 30px; display: flex; align-items: center; justify-content: center; }
.ic svg { width: 22px; height: 22px; }

/* histogram */
.hist { left: 1501px; top: 400px; width: 467px; height: 569px; }
.hbody { flex: 1; min-height: 0; border: 1px solid #000; padding: 3px 4px 4px; display: flex; flex-direction: column; }
.htop { display: flex; gap: 1px; height: 288px; flex: none; }
.hleft { width: 103px; background: var(--blue); border: 1px solid #000; display: flex; flex-direction: column; flex: none; margin-left: -1px; }
.radios { border-bottom: 1px solid #000; }
.radios label { display: flex; align-items: center; gap: 6px; height: 27px; padding-left: 8px; }
.radios label:first-child { height: 29px; }
.hleft .listrow { flex: 1; }
.hleft .list { padding: 3px 2px; }
.hleft .icons { padding: 3px 2px 2px; }
.hright { flex: 1; min-width: 0; background: var(--blue); border: 2px solid; border-color: var(--blue-dk) var(--blue-lt) var(--blue-lt) var(--blue-dk); display: flex; flex-direction: column; }
.chart { flex: 1; min-height: 0; display: flex; flex-direction: column; }
.ctitle { margin: 2px 0 0 45px; height: 22px; background: #b0ffff; border: 1px solid #000; box-shadow: 2px 2px 0 var(--blue-dk); font-style: italic; line-height: 22px; padding-left: 3px; white-space: nowrap; flex: none; }
.bars { flex: 1; display: flex; align-items: flex-end; padding-left: 4px; border-bottom: 3px solid #000; }
.bars div { width: 56px; margin-right: -1px; text-align: center; display: flex; flex-direction: column; }
.bars span { line-height: 16px; }
.bars i { display: block; background: #ff1c1c; border: 1px solid #000; border-bottom: 0; }
.b1 { height: 92px; }
.b2 { height: 123px; }
.blabels { display: flex; padding: 2px 0 6px 4px; }
.blabels span { width: 56px; height: 29px; margin-right: -1px; background: #ff1c1c; border: 1px solid #000; text-align: center; line-height: 14px; padding-top: 2px; }
.hopts { display: flex; border: 2px solid #000; height: 64px; margin-top: 1px; flex: none; }
.hopts .listrow { width: 108px; }
.hopts .list { padding: 2px 3px 0 1px; }
.reso { flex: 1; border-left: 1px solid #000; display: flex; flex-direction: column; padding: 1px 2px 2px; }
.reso label { text-align: center; }
.reso output { padding: 4px 0 3px 4px; flex: 1; }
.reso input { appearance: none; width: 100%; height: 16px; background: #84b8b8; border: 2px solid; border-color: var(--blue-dk) var(--blue-lt) var(--blue-lt) var(--blue-dk); }
.reso input::-webkit-slider-thumb { appearance: none; width: 30px; height: 12px; border: 1px solid; border-color: var(--blue-lt) var(--blue-dk) var(--blue-dk) var(--blue-lt); background: linear-gradient(90deg, var(--blue) 13px, var(--blue-dk) 13px 14px, var(--blue-lt) 14px 15px, var(--blue) 15px); }
.sash { height: 8px; border-bottom: 2px solid var(--teal-dk); position: relative; flex: none; }
.sash i { position: absolute; right: 4px; top: 0; width: 10px; height: 9px; background: var(--teal); border: 2px solid; border-color: var(--teal-lt) var(--teal-dk) var(--teal-dk) var(--teal-lt); }
.map { flex: 1; min-height: 0; border: 1px solid #000; outline: 1px solid var(--teal-lt); margin: 0 1px; display: flex; align-items: center; justify-content: center; }
.map svg { width: 78px; height: 122px; }
.hfoot { display: flex; gap: 3px; margin-top: 3px; height: 41px; align-items: center; flex: none; }
.hfoot button { height: 38px; }
.hfoot button + button { margin-left: 2px; }
.hfoot .big { width: 38px; }
.big svg { width: 32px; height: 30px; }
.count { flex: 1; height: 41px; background: var(--blue); border: 1px solid #000; line-height: 40px; padding-left: 2px; }

/* measure popup */
.meas { left: 1864px; top: 246px; width: 184px; height: 252px; }
.mmode { background: var(--blue); border: 1px solid #000; height: 17px; line-height: 16px; text-align: center; flex: none; }
.meas label { background: var(--blue); border: 1px solid #000; height: 29px; display: flex; align-items: center; gap: 7px; padding-left: 7px; flex: none; white-space: nowrap; }
.mfoot { margin-top: auto; padding: 2px; border: 1px solid #000; }
.mfoot button { width: 100%; height: 23px; display: block; line-height: 18px; }

/* input method bar */
.ime { position: absolute; right: 2px; top: 1032px; display: flex; align-items: flex-end; }
.slogo { width: 28px; height: 28px; margin-right: -4px; position: relative; }
.ime div { display: flex; align-items: center; gap: 8px; height: 24px; background: #fff; padding: 0 6px 0 10px; font: bold 15px/20px var(--ui); color: #484c58; }
.ime div svg { width: 14px; height: 15px; fill: #484c58; }

/* task bar */
.taskbar { height: 40px; background: #101010; color: #fff; display: flex; flex: none; font: 12px/16px var(--ui); }
.start { width: 55px; padding: 0 0 0 16px; }
.start svg { width: 16px; height: 16px; }
.tasks { flex: 1; min-width: 0; display: grid; grid-template-columns: repeat(17, 1fr); gap: 8px; }
.tasks button { display: flex; align-items: center; gap: 6px; padding-left: 4px; border-bottom: 2px solid #b0d8f4; white-space: nowrap; overflow: hidden; }
.tasks svg { width: 22px; height: 22px; }
.tasks .act { background: #343434; }
.tray { width: 263px; display: flex; align-items: center; padding-left: 12px; gap: 8px; }
.tray > svg { width: 16px; height: 16px; }
.tray time { width: 82px; text-align: center; line-height: 20px; }
.tray span { font-size: 15px; }
.tray .note-i { width: 26px; height: 26px; }
.tray text { font: bold 14px var(--ui); fill: #fff; text-anchor: middle; }
```
